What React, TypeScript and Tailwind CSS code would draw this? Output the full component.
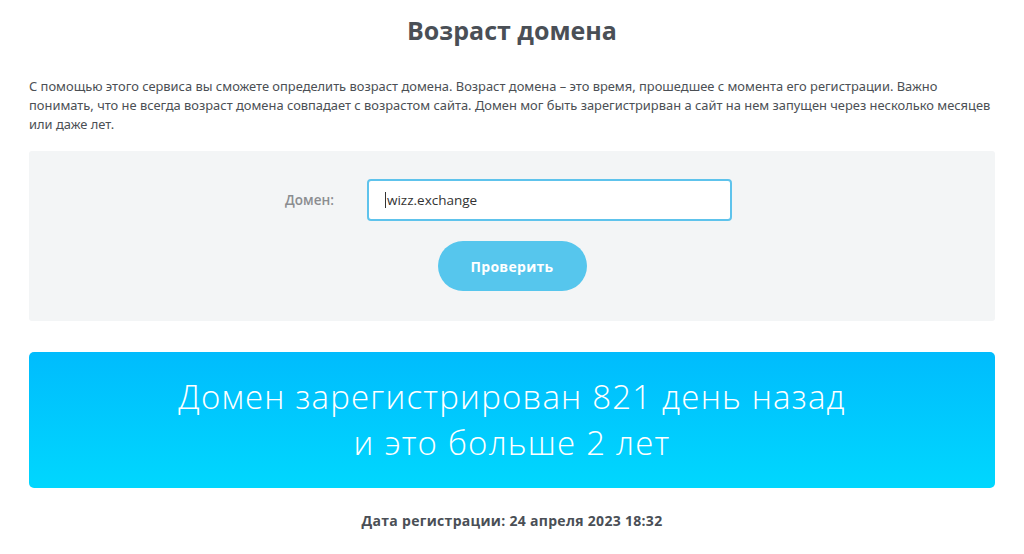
import React from 'react';

const headFont = { fontFamily: '"Open Sans", "Noto Sans", sans-serif' };

const intro = [
  'С помощью этого сервиса вы сможете определить возраст домена. Возраст домена – это время, прошедшее с момента его регистрации. Важно',
  'понимать, что не всегда возраст домена совпадает с возрастом сайта. Домен мог быть зарегистрирван а сайт на нем запущен через несколько месяцев',
  'или даже лет.',
];

export default function App() {
  return (
    <div className="min-h-[554px] bg-white px-[29px] text-[#4b5055]" style={headFont}>
      <h1 className="pt-[14px] text-center text-[25px] font-bold leading-[32px] text-[#4a4f56]">
        Возраст домена
      </h1>

      <div
        className="mt-[31px] text-[12.9px] leading-[19px] text-[#4b4f54]"
        style={{ fontFamily: '"Noto Sans", "Open Sans", sans-serif' }}
      >
        {intro.map((line) => (
          <div key={line} className="whitespace-nowrap">
            {line}
          </div>
        ))}
      </div>

      {/* form */}
      <div className="mt-[17px] flex h-[170px] flex-col items-center rounded-[3px] bg-[#f3f5f6] pt-[28px]">
        <div className="mr-[7px] flex items-center">
          <label className="mr-[32px] w-[50px] text-[13.5px] font-semibold text-[#8b8d90]">Домен:</label>
          <div className="flex h-[42px] w-[365px] items-center rounded-[4px] border-2 border-[#5ec3ec] bg-white pl-[16px] text-[13.5px] text-[#333]">
            <span className="mr-[1px] h-[16px] w-[1px] bg-[#333]" />
            wizz.exchange
          </div>
        </div>
        <button className="mt-[20px] h-[50px] w-[149px] rounded-full bg-[#56c6ed] text-[14px] font-bold tracking-[0.3px] text-white">
          Проверить
        </button>
      </div>

      {/* result */}
      <div className="mt-[31px] flex h-[136px] flex-col items-center justify-center rounded-[5px] bg-gradient-to-b from-[#00bcfd] to-[#00d7fe] text-center text-[33px] font-light leading-[46px] tracking-[1.2px] text-white">
        <div>Домен зарегистрирован 821 день назад</div>
        <div>и это больше 2 лет</div>
      </div>

      <div className="mt-[22px] text-center text-[14px] font-bold tracking-[0.3px] text-[#4a4f56]">
        Дата регистрации: 24 апреля 2023 18:32
      </div>
    </div>
  );
}
